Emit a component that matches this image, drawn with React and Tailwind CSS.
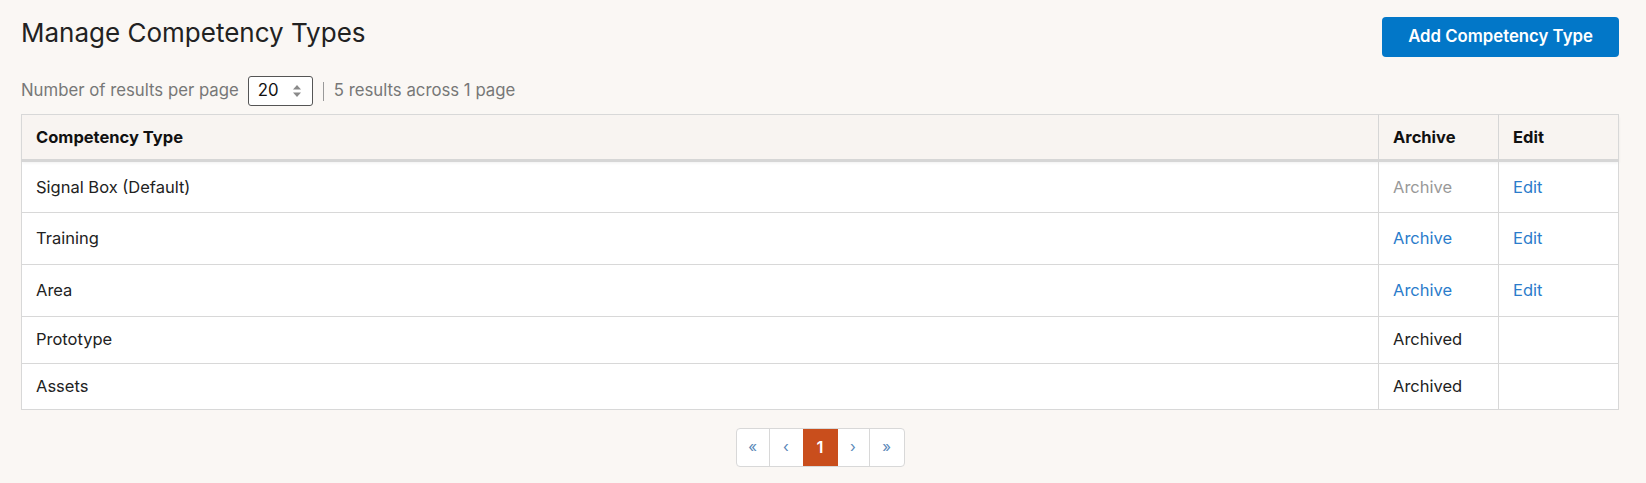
import React from "react";

const rows = [
  { name: "Signal Box (Default)", archive: "disabled", edit: true },
  { name: "Training", archive: "link", edit: true },
  { name: "Area", archive: "link", edit: true },
  { name: "Prototype", archive: "archived", edit: false },
  { name: "Assets", archive: "archived", edit: false },
];

function UpDown() {
  return (
    <svg width="10" height="14" viewBox="0 0 10 14" fill="#8a8a8a">
      <path d="M5 1 L9 5.5 H1 Z" />
      <path d="M5 13 L9 8.5 H1 Z" />
    </svg>
  );
}

export default function App() {
  return (
    <div
      className="min-h-screen bg-[#faf7f4] px-[21px] text-[16.5px] text-[#222]"
      style={{ fontFamily: "Inter, 'Noto Sans', sans-serif" }}
    >
      <div className="flex items-start justify-between pt-[17px] pr-[6px]">
        <h1 className="-mt-[2px] text-[26px] leading-[36px] text-[#222]">Manage Competency Types</h1>
        <button className="h-[40px] w-[237px] rounded-[4px] bg-[#0277c8] text-[16.75px] font-semibold text-white">
          Add Competency Type
        </button>
      </div>

      <div className="mt-[19px] flex items-center text-[16.75px] text-[#777]">
        <span>Number of results per page</span>
        <div className="ml-[9px] flex h-[30px] w-[65px] items-center justify-between rounded-[3px] border border-[#555] bg-white pl-[9px] pr-[10px] text-[#111]">
          <span>20</span>
          <UpDown />
        </div>
        <span className="ml-[10px] h-[19px] w-px bg-[#999]" />
        <span className="ml-[10px]">5 results across 1 page</span>
      </div>

      <div className="mt-[8px] mr-[6px]">
        <table className="w-full border-collapse border border-[#d8d8d8] bg-white">
          <thead>
            <tr className="h-[46px] bg-[#f8f4f1] shadow-[0_2px_3px_rgba(0,0,0,0.06)]">
              <th className="border-b-[3px] border-[#d6d6d6] px-[14px] text-left font-bold text-[#111]">Competency Type</th>
              <th className="w-[120px] border-b-[3px] border-l border-[#d6d6d6] px-[14px] text-left font-bold text-[#111]">Archive</th>
              <th className="w-[120px] border-b-[3px] border-l border-[#d6d6d6] px-[14px] text-left font-bold text-[#111]">Edit</th>
            </tr>
          </thead>
          <tbody>
            {rows.map((r) => (
              <tr key={r.name} className={r.edit ? "h-[52px]" : "h-[46.5px]"}>
                <td className="border-t border-[#d8d8d8] px-[14px] text-[#222]">{r.name}</td>
                <td className="border-t border-l border-[#d8d8d8] px-[14px]">
                  {r.archive === "disabled" && <span className="text-[#999]">Archive</span>}
                  {r.archive === "link" && <a className="text-[#2b7ccb]">Archive</a>}
                  {r.archive === "archived" && <span className="text-[#222]">Archived</span>}
                </td>
                <td className="border-t border-l border-[#d8d8d8] px-[14px]">
                  {r.edit && <a className="text-[#2b7ccb]">Edit</a>}
                </td>
              </tr>
            ))}
          </tbody>
        </table>
      </div>

      <div className="mt-[18px] flex justify-center pr-[6px]">
        <div className="flex h-[39px] overflow-hidden rounded-[4px] border border-[#d8d8d8] bg-white text-[#5a88b8]">
          <span className="flex w-[33px] items-center justify-center border-r border-[#d8d8d8] text-[15px]">«</span>
          <span className="flex w-[33px] items-center justify-center text-[15px]">‹</span>
          <span className="flex w-[35px] items-center justify-center bg-[#c94e1c] font-semibold text-white">1</span>
          <span className="flex w-[32px] items-center justify-center border-r border-[#d8d8d8] text-[15px]">›</span>
          <span className="flex w-[34px] items-center justify-center text-[15px]">»</span>
        </div>
      </div>
    </div>
  );
}
